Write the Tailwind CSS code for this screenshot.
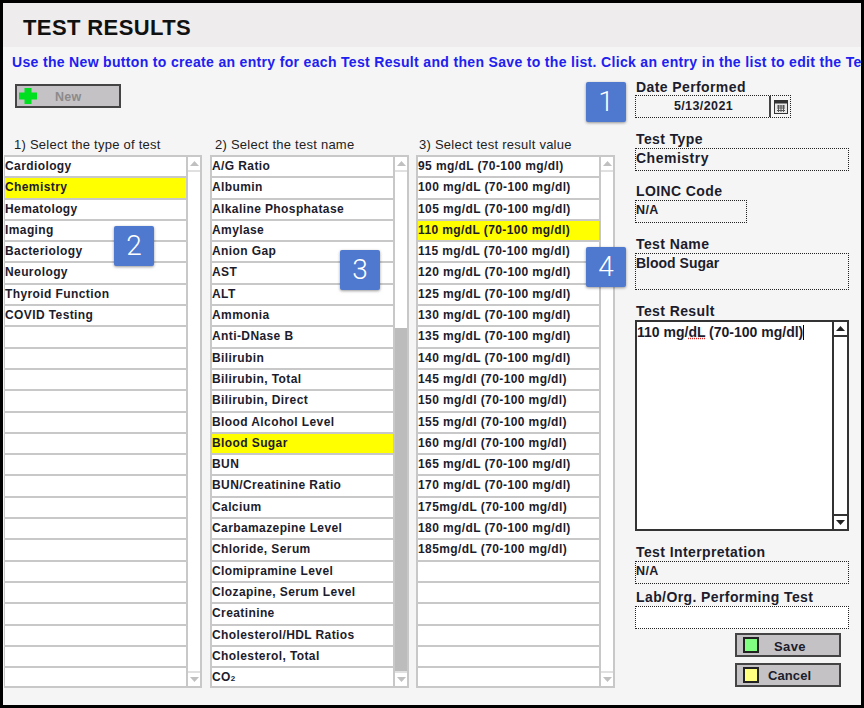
<!DOCTYPE html>
<html><head><meta charset="utf-8"><script src="https://cdn.jsdelivr.net/npm/@tailwindcss/browser@4"></script></head>
<body class="bg-black overflow-hidden">
<div class="relative w-[864px] h-[708px] bg-black pt-[3px] pl-[3px] font-['Liberation_Sans',sans-serif] text-[#1a1a1a] overflow-hidden">
<div class="relative w-[858px] h-[702px] bg-[#f5f5f5] overflow-hidden">
  <div class="h-[44px] bg-[#efecee] pl-[20px] pt-[10px] text-[22px] leading-[30px] font-bold text-[#111] tracking-[0.4px]">TEST RESULTS</div>
  <div class="h-[30px] pl-[9px] pt-[6px] whitespace-nowrap text-[14px] leading-[18px] font-bold text-[#2020f0] tracking-[0.33px]">Use the New button to create an entry for each Test Result and then Save to the list. Click an entry in the list to edit the Test Result.</div>
  <div class="flex">
    <div class="w-[632px] shrink-0">
      <div class="h-[24px] ml-[12px] mt-[7px] w-[106px] flex items-center bg-[#c4c2c4] border-2 border-[#444] relative">
        <svg class="ml-[2px]" width="18" height="16" viewBox="0 0 18 16"><path d="M5.500 0h7v4.500h5.500v7h-5.500V16h-7v-4.500H0v-7h5.500z" fill="#00e020"/></svg>
        <span class="ml-[18px] pt-[3px] text-[12.5px] font-bold text-[#8c8a8c] tracking-[0.3px]">New</span>
      </div>
      <div class="flex mt-[28px] pl-[1px]">
        <div class="w-[206px] shrink-0">
          <div class="h-[19px] pl-[10px] text-[13px] leading-[18px] text-[#222] tracking-[0.25px]">1) Select the type of test</div>
          <div class="flex w-[198px] h-[533px] border-2 border-l border-[#c8c8c8] bg-white">
            <div class="w-[181px] text-[12px] font-bold tracking-[0.4px] text-[#1c1c2c]">
              <div class="h-[21.3px] border-b-2 border-[#c8c8c8] leading-[19px]">Cardiology</div>
              <div class="h-[21.3px] border-b-2 border-[#c8c8c8] leading-[19px] bg-[#ffff00]">Chemistry</div>
              <div class="h-[21.3px] border-b-2 border-[#c8c8c8] leading-[19px]">Hematology</div>
              <div class="h-[21.3px] border-b-2 border-[#c8c8c8] leading-[19px]">Imaging</div>
              <div class="h-[21.3px] border-b-2 border-[#c8c8c8] leading-[19px]">Bacteriology</div>
              <div class="h-[21.3px] border-b-2 border-[#c8c8c8] leading-[19px]">Neurology</div>
              <div class="h-[21.3px] border-b-2 border-[#c8c8c8] leading-[19px]">Thyroid Function</div>
              <div class="h-[21.3px] border-b-2 border-[#c8c8c8] leading-[19px]">COVID Testing</div>
              <div class="h-[21.3px] border-b-2 border-[#c8c8c8]"></div><div class="h-[21.3px] border-b-2 border-[#c8c8c8]"></div><div class="h-[21.3px] border-b-2 border-[#c8c8c8]"></div><div class="h-[21.3px] border-b-2 border-[#c8c8c8]"></div><div class="h-[21.3px] border-b-2 border-[#c8c8c8]"></div><div class="h-[21.3px] border-b-2 border-[#c8c8c8]"></div><div class="h-[21.3px] border-b-2 border-[#c8c8c8]"></div><div class="h-[21.3px] border-b-2 border-[#c8c8c8]"></div><div class="h-[21.3px] border-b-2 border-[#c8c8c8]"></div><div class="h-[21.3px] border-b-2 border-[#c8c8c8]"></div><div class="h-[21.3px] border-b-2 border-[#c8c8c8]"></div><div class="h-[21.3px] border-b-2 border-[#c8c8c8]"></div><div class="h-[21.3px] border-b-2 border-[#c8c8c8]"></div><div class="h-[21.3px] border-b-2 border-[#c8c8c8]"></div><div class="h-[21.3px] border-b-2 border-[#c8c8c8]"></div><div class="h-[21.3px] border-b-2 border-[#c8c8c8]"></div>
            </div>
            <div class="flex-1 flex flex-col border-l-2 border-[#c8c8c8] bg-white justify-between">
              <div class="h-[15px] flex items-center justify-center border-b-2 border-[#e0e0e0]"><svg width="9" height="5" viewBox="0 0 9 5"><path d="M0 5L4.500 0L9 5z" fill="#c0c0c0"/></svg></div>
              <div class="h-[15px] flex items-center justify-center border-t-2 border-[#e0e0e0]"><svg width="9" height="5" viewBox="0 0 9 5"><path d="M0 0L4.500 5L9 0z" fill="#c0c0c0"/></svg></div>
            </div>
          </div>
        </div>
        <div class="w-[206px] shrink-0">
          <div class="h-[19px] pl-[5px] text-[13px] leading-[18px] text-[#222] tracking-[0.25px]">2) Select the test name</div>
          <div class="flex w-[199px] h-[533px] border-2 border-[#c8c8c8] bg-white">
            <div class="w-[181px] text-[12px] font-bold tracking-[0.4px] text-[#1c1c2c]">
              <div class="h-[21.3px] border-b-2 border-[#c8c8c8] leading-[19px]">A/G Ratio</div>
              <div class="h-[21.3px] border-b-2 border-[#c8c8c8] leading-[19px]">Albumin</div>
              <div class="h-[21.3px] border-b-2 border-[#c8c8c8] leading-[19px]">Alkaline Phosphatase</div>
              <div class="h-[21.3px] border-b-2 border-[#c8c8c8] leading-[19px]">Amylase</div>
              <div class="h-[21.3px] border-b-2 border-[#c8c8c8] leading-[19px]">Anion Gap</div>
              <div class="h-[21.3px] border-b-2 border-[#c8c8c8] leading-[19px]">AST</div>
              <div class="h-[21.3px] border-b-2 border-[#c8c8c8] leading-[19px]">ALT</div>
              <div class="h-[21.3px] border-b-2 border-[#c8c8c8] leading-[19px]">Ammonia</div>
              <div class="h-[21.3px] border-b-2 border-[#c8c8c8] leading-[19px]">Anti-DNase B</div>
              <div class="h-[21.3px] border-b-2 border-[#c8c8c8] leading-[19px]">Bilirubin</div>
              <div class="h-[21.3px] border-b-2 border-[#c8c8c8] leading-[19px]">Bilirubin, Total</div>
              <div class="h-[21.3px] border-b-2 border-[#c8c8c8] leading-[19px]">Bilirubin, Direct</div>
              <div class="h-[21.3px] border-b-2 border-[#c8c8c8] leading-[19px]">Blood Alcohol Level</div>
              <div class="h-[21.3px] border-b-2 border-[#c8c8c8] leading-[19px] bg-[#ffff00]">Blood Sugar</div>
              <div class="h-[21.3px] border-b-2 border-[#c8c8c8] leading-[19px]">BUN</div>
              <div class="h-[21.3px] border-b-2 border-[#c8c8c8] leading-[19px]">BUN/Creatinine Ratio</div>
              <div class="h-[21.3px] border-b-2 border-[#c8c8c8] leading-[19px]">Calcium</div>
              <div class="h-[21.3px] border-b-2 border-[#c8c8c8] leading-[19px]">Carbamazepine Level</div>
              <div class="h-[21.3px] border-b-2 border-[#c8c8c8] leading-[19px]">Chloride, Serum</div>
              <div class="h-[21.3px] border-b-2 border-[#c8c8c8] leading-[19px]">Clomipramine Level</div>
              <div class="h-[21.3px] border-b-2 border-[#c8c8c8] leading-[19px]">Clozapine, Serum Level</div>
              <div class="h-[21.3px] border-b-2 border-[#c8c8c8] leading-[19px]">Creatinine</div>
              <div class="h-[21.3px] border-b-2 border-[#c8c8c8] leading-[19px]">Cholesterol/HDL Ratios</div>
              <div class="h-[21.3px] border-b-2 border-[#c8c8c8] leading-[19px]">Cholesterol, Total</div>
              <div class="h-[19px] leading-[19px]">CO<span class="text-[8px]">2</span></div>
            </div>
            <div class="flex-1 flex flex-col border-l-2 border-[#c8c8c8] bg-white">
              <div class="h-[15px] shrink-0 flex items-center justify-center border-b-2 border-[#e0e0e0]"><svg width="9" height="5" viewBox="0 0 9 5"><path d="M0 5L4.500 0L9 5z" fill="#c0c0c0"/></svg></div>
              <div class="h-[156px] shrink-0"></div>
              <div class="flex-1 bg-[#bcbcbc]"></div>
              <div class="h-[15px] shrink-0 flex items-center justify-center border-t-2 border-[#e0e0e0]"><svg width="9" height="5" viewBox="0 0 9 5"><path d="M0 0L4.500 5L9 0z" fill="#c0c0c0"/></svg></div>
            </div>
          </div>
        </div>
        <div class="w-[206px] shrink-0">
          <div class="h-[19px] pl-[3px] text-[13px] leading-[18px] text-[#222] tracking-[0.25px]">3) Select test result value</div>
          <div class="flex w-[199px] h-[533px] border-2 border-[#c8c8c8] bg-white">
            <div class="w-[181px] text-[12px] font-bold tracking-[0.4px] text-[#1c1c2c]">
              <div class="h-[21.3px] border-b-2 border-[#c8c8c8] leading-[19px]">95 mg/dL (70-100 mg/dl)</div>
              <div class="h-[21.3px] border-b-2 border-[#c8c8c8] leading-[19px]">100 mg/dL (70-100 mg/dl)</div>
              <div class="h-[21.3px] border-b-2 border-[#c8c8c8] leading-[19px]">105 mg/dL (70-100 mg/dl)</div>
              <div class="h-[21.3px] border-b-2 border-[#c8c8c8] leading-[19px] bg-[#ffff00]">110 mg/dL (70-100 mg/dl)</div>
              <div class="h-[21.3px] border-b-2 border-[#c8c8c8] leading-[19px]">115 mg/dL (70-100 mg/dl)</div>
              <div class="h-[21.3px] border-b-2 border-[#c8c8c8] leading-[19px]">120 mg/dL (70-100 mg/dl)</div>
              <div class="h-[21.3px] border-b-2 border-[#c8c8c8] leading-[19px]">125 mg/dL (70-100 mg/dl)</div>
              <div class="h-[21.3px] border-b-2 border-[#c8c8c8] leading-[19px]">130 mg/dL (70-100 mg/dl)</div>
              <div class="h-[21.3px] border-b-2 border-[#c8c8c8] leading-[19px]">135 mg/dL (70-100 mg/dl)</div>
              <div class="h-[21.3px] border-b-2 border-[#c8c8c8] leading-[19px]">140 mg/dL (70-100 mg/dl)</div>
              <div class="h-[21.3px] border-b-2 border-[#c8c8c8] leading-[19px]">145 mg/dl (70-100 mg/dl)</div>
              <div class="h-[21.3px] border-b-2 border-[#c8c8c8] leading-[19px]">150 mg/dl (70-100 mg/dl)</div>
              <div class="h-[21.3px] border-b-2 border-[#c8c8c8] leading-[19px]">155 mg/dl (70-100 mg/dl)</div>
              <div class="h-[21.3px] border-b-2 border-[#c8c8c8] leading-[19px]">160 mg/dl (70-100 mg/dl)</div>
              <div class="h-[21.3px] border-b-2 border-[#c8c8c8] leading-[19px]">165 mg/dL (70-100 mg/dl)</div>
              <div class="h-[21.3px] border-b-2 border-[#c8c8c8] leading-[19px]">170 mg/dL (70-100 mg/dl)</div>
              <div class="h-[21.3px] border-b-2 border-[#c8c8c8] leading-[19px]">175mg/dL (70-100 mg/dl)</div>
              <div class="h-[21.3px] border-b-2 border-[#c8c8c8] leading-[19px]">180 mg/dL (70-100 mg/dl)</div>
              <div class="h-[21.3px] border-b-2 border-[#c8c8c8] leading-[19px]">185mg/dL (70-100 mg/dl)</div>
              <div class="h-[21.3px] border-b-2 border-[#c8c8c8]"></div><div class="h-[21.3px] border-b-2 border-[#c8c8c8]"></div><div class="h-[21.3px] border-b-2 border-[#c8c8c8]"></div><div class="h-[21.3px] border-b-2 border-[#c8c8c8]"></div><div class="h-[21.3px] border-b-2 border-[#c8c8c8]"></div>
            </div>
            <div class="flex-1 flex flex-col border-l-2 border-[#c8c8c8] bg-white justify-between">
              <div class="h-[15px] flex items-center justify-center border-b-2 border-[#e0e0e0]"><svg width="9" height="5" viewBox="0 0 9 5"><path d="M0 5L4.500 0L9 5z" fill="#c0c0c0"/></svg></div>
              <div class="h-[15px] flex items-center justify-center border-t-2 border-[#e0e0e0]"><svg width="9" height="5" viewBox="0 0 9 5"><path d="M0 0L4.500 5L9 0z" fill="#c0c0c0"/></svg></div>
            </div>
          </div>
        </div>
      </div>
    </div>
    <div class="w-[214px] shrink-0 text-[14px] font-bold tracking-[0.4px] text-[#1c1c2c]">
      <div class="h-[15px] leading-[14px] mt-[3px] pl-[1px]">Date Performed</div>
      <div class="flex w-[156px] h-[23px] border border-dotted border-[#222] bg-[#f5f5f5]">
        <div class="w-[135px] text-center leading-[20px] border-r-2 border-[#444] text-[12.5px] tracking-[0.4px] pl-[2px]">5/13/2021</div>
        <div class="flex-1 flex items-center justify-center"><svg width="14" height="14" viewBox="0 0 14 14"><rect x="0.5" y="0.5" width="13" height="13" fill="#e8e8e8" stroke="#333"/><rect x="0.5" y="0.5" width="13" height="3" fill="#333"/><path d="M3 6h8M3 8h8M3 10.500h8M4.500 5v7M7 5v7M9.500 5v7" stroke="#555" stroke-width="1"/></svg></div>
      </div>
      <div class="h-[16px] leading-[14px] mt-[14px] pl-[1px]">Test Type</div>
      <div class="w-[214px] h-[23px] border border-dotted border-[#222] leading-[18px] tracking-[0.5px]">Chemistry</div>
      <div class="h-[16px] leading-[14px] mt-[13px] pl-[1px]">LOINC Code</div>
      <div class="w-[112px] h-[23px] border border-dotted border-[#222] leading-[18px] text-[12.5px]">N/A</div>
      <div class="h-[16px] leading-[14px] mt-[14px] pl-[1px]">Test Name</div>
      <div class="w-[214px] h-[37px] border border-dotted border-[#222] leading-[18px] tracking-[0px]">Blood Sugar</div>
      <div class="h-[16px] leading-[14px] mt-[14px] pl-[1px]">Test Result</div>
      <div class="flex w-[214px] h-[211px] border-2 border-[#333] bg-white">
        <div class="flex-1 leading-[20px] tracking-[0px] whitespace-nowrap">110 mg/<span class="underline decoration-dotted decoration-[#e02020]">dL</span> (70-100 mg/dl)<span class="inline-block w-[1px] h-[15px] bg-black align-[-3px]"></span></div>
        <div class="w-[15px] flex flex-col justify-between border-l-2 border-[#333]">
          <div class="h-[15px] flex items-center justify-center border-b-2 border-[#333]"><svg width="9" height="5" viewBox="0 0 9 5"><path d="M0 5L4.500 0L9 5z" fill="#222"/></svg></div>
          <div class="h-[15px] flex items-center justify-center border-t-2 border-[#333]"><svg width="9" height="5" viewBox="0 0 9 5"><path d="M0 0L4.500 5L9 0z" fill="#222"/></svg></div>
        </div>
      </div>
      <div class="h-[16px] leading-[14px] mt-[14px] pl-[1px]">Test Interpretation</div>
      <div class="w-[214px] h-[23px] border border-dotted border-[#222] leading-[18px] text-[12.5px]">N/A</div>
      <div class="h-[16px] leading-[14px] mt-[6px] pl-[1px]">Lab/Org. Performing Test</div>
      <div class="w-[214px] h-[23px] border border-dotted border-[#222] bg-white"></div>
      <div class="ml-[100px] mt-[4px] w-[106px] h-[24px] flex items-center bg-[#c4c2c4] border-2 border-[#444]">
        <span class="block ml-[6px] w-[16px] h-[16px] bg-[#80ff80] border-2 border-[#222]"></span>
        <span class="ml-[15px] pt-[3px] text-[13px] tracking-[0.4px]">Save</span>
      </div>
      <div class="ml-[100px] mt-[6px] w-[106px] h-[24px] flex items-center bg-[#c4c2c4] border-2 border-[#444]">
        <span class="block ml-[6px] w-[16px] h-[16px] bg-[#ffff80] border-2 border-[#222]"></span>
        <span class="ml-[9px] pt-[2px] text-[13px] tracking-[0.1px]">Cancel</span>
      </div>
    </div>
  </div>
  <div class="absolute left-[583px] top-[79px] w-[40px] h-[40px] rounded-[2px] bg-[#4f78cf] shadow-[0_1px_3px_rgba(0,0,0,0.4)] text-white text-[28px] flex items-center justify-center font-['Roboto',sans-serif] font-light">1</div>
  <div class="absolute left-[111px] top-[223px] w-[40px] h-[40px] rounded-[2px] bg-[#4f78cf] shadow-[0_1px_3px_rgba(0,0,0,0.4)] text-white text-[28px] flex items-center justify-center font-['Roboto',sans-serif] font-light">2</div>
  <div class="absolute left-[337px] top-[247px] w-[40px] h-[40px] rounded-[2px] bg-[#4f78cf] shadow-[0_1px_3px_rgba(0,0,0,0.4)] text-white text-[28px] flex items-center justify-center font-['Roboto',sans-serif] font-light">3</div>
  <div class="absolute left-[583px] top-[244px] w-[40px] h-[40px] rounded-[2px] bg-[#4f78cf] shadow-[0_1px_3px_rgba(0,0,0,0.4)] text-white text-[28px] flex items-center justify-center font-['Roboto',sans-serif] font-light">4</div>
</div>
</div>
</body></html>
